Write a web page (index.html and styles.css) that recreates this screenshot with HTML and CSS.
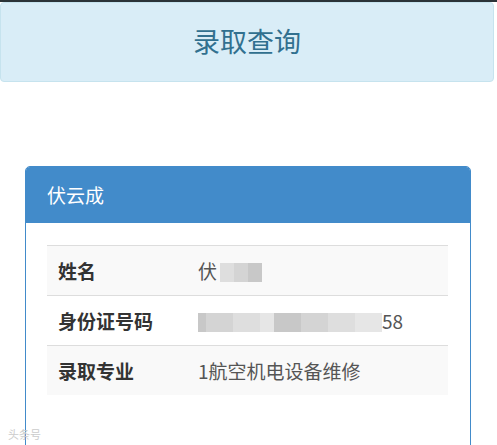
FILE: index.html
```html
<!DOCTYPE html>
<html lang="zh-CN">
<head>
    <meta charset="UTF-8">
    <meta name="viewport" content="width=device-width, initial-scale=1.0">
    <title>录取查询</title>
    <link rel="stylesheet" href="styles.css">
</head>
<body>
    <div class="topbar"></div>
    <div class="header">
        <h1>录取查询</h1>
    </div>

    <div class="panel">
        <div class="panel-heading">伏云成</div>
        <div class="panel-body">
            <table>
                <tbody>
                    <tr class="striped">
                        <th>姓名</th>
                        <td>伏<span class="blur b3 gap"></span><span class="blur b1"></span><span class="blur b2"></span></td>
                    </tr>
                    <tr>
                        <th>身份证号码</th>
                        <td><span class="blur b2 short"></span><span class="blur b1 wide"></span><span class="blur b3 wide"></span><span class="blur b4"></span><span class="blur b2 wide"></span><span class="blur b1 wide"></span><span class="blur b3 wide"></span><span class="blur b4 wide"></span>58</td>
                    </tr>
                    <tr class="striped">
                        <th>录取专业</th>
                        <td>1航空机电设备维修</td>
                    </tr>
                </tbody>
            </table>
        </div>
    </div>

    <div class="watermark">头条号</div>
</body>
</html>
```

FILE: styles.css
```css
body {
    font-family: "Noto Sans CJK SC", "Noto Sans", sans-serif;
    margin: 0;
    background-color: #fff;
    color: #333;
}
.topbar {
    height: 2px;
    background: #2b3338;
}
.header {
    width: 492px;
    height: 78px;
    background: #d9edf7;
    border: 1px solid #c6e3ee;
    border-radius: 4px;
    display: flex;
    align-items: center;
    justify-content: center;
}
.header h1 {
    margin: 0 0 3px;
    font-size: 27px;
    font-weight: normal;
    color: #31708f;
}
.panel {
    margin: 84px 0 0 25px;
    width: 444px;
    border: 1px solid #428bca;
    border-radius: 5px;
    overflow: hidden;
}
.panel-heading {
    background: #428bca;
    color: #fff;
    height: 56px;
    line-height: 56px;
    padding-left: 21px;
    font-size: 19px;
}
.panel-body {
    padding: 22px 22px 60px 21px;
}
table {
    width: 100%;
    border-collapse: collapse;
}
th, td {
    height: 49px;
    text-align: left;
    border-top: 1px solid #ddd;
    font-size: 19px;
    padding: 0 0 0 11px;
}
th {
    width: 129px;
    font-weight: bold;
    color: #333;
}
td {
    color: #555;
}
.striped {
    background: #f9f9f9;
}
.blur {
    display: inline-block;
    width: 14px;
    height: 19px;
    vertical-align: -3px;
}
.b1 { background: #d4d4d4; }
.b2 { background: #c8c8c8; }
.b3 { background: #dedede; }
.b4 { background: #e6e6e6; }
.gap { margin-left: 3px; }
.short { width: 8px; }
.wide { width: 27px; }
.watermark {
    position: absolute;
    left: 8px;
    top: 426px;
    font-size: 11px;
    color: #ccc;
}
```
